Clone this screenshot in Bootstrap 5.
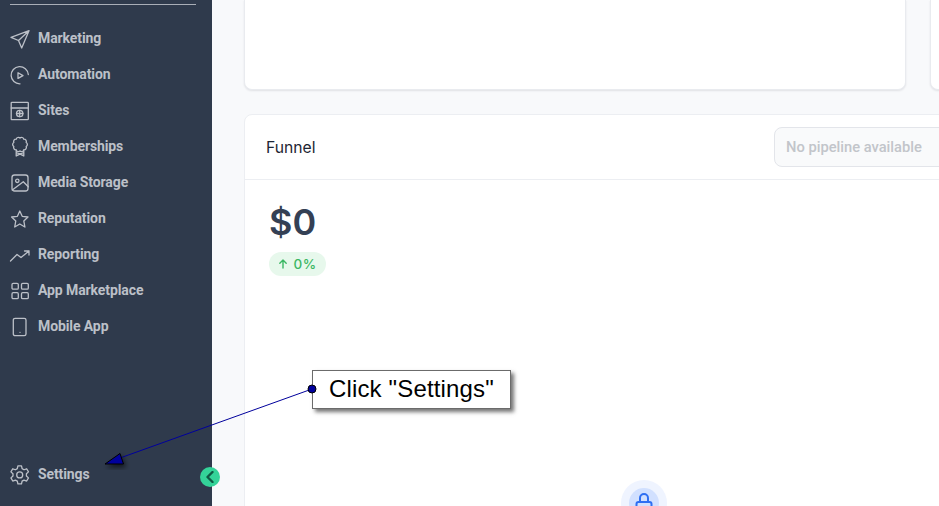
<!DOCTYPE html>
<html lang="en">
<head>
    <meta charset="UTF-8">
    <meta name="viewport" content="width=device-width, initial-scale=1.0">
    <title>Funnel</title>
    <link href="https://cdn.jsdelivr.net/npm/bootstrap@5.3.0/dist/css/bootstrap.min.css" rel="stylesheet">
    <style>
        html, body { height: 506px; overflow: hidden; }
        body { background: #f8f9fb; font-family: Inter, sans-serif; }
        .page-wrap { width: 939px; height: 506px; overflow: hidden; position: relative; }
        .side-bar { width: 212px; height: 506px; background: #2f3a4c; padding: 4px 16px 14px 10px; flex-shrink: 0; }
        .side-rule { height: 1px; background: #a9aeb7; margin-bottom: 15px; }
        .side-link { height: 36px; gap: 8px; color: #bcc0c8; font: 700 14px/36px Roboto, sans-serif; letter-spacing: -.1px; text-decoration: none; }
        .side-link:hover { color: #bcc0c8; }
        .side-link svg { width: 20px; height: 20px; fill: none; stroke: #bcc0c8; stroke-width: 1.3; stroke-linecap: round; stroke-linejoin: round; flex-shrink: 0; overflow: visible; }
        .side-link svg * { vector-effect: non-scaling-stroke; }
        .collapse-btn { position: absolute; left: 200px; top: 467px; width: 20px; height: 20px; border-radius: 50%; background: #34d399; }
        .main-pane { width: 727px; padding-left: 32px; flex-shrink: 0; }
        .top-row { height: 90px; gap: 24px; }
        .top-card { width: 662px; flex-shrink: 0; background: #fff; border: 1px solid #e9ebef; border-top: 0; border-radius: 0 0 8px 8px; box-shadow: 0 1px 2px rgba(16,24,40,.1); }
        .funnel-card { width: 800px; margin-top: 24px; background: #fff; border: 1px solid #eceef2; border-radius: 8px; }
        .funnel-head { height: 65px; padding: 0 21px; border-bottom: 1px solid #eceef2; }
        .funnel-title { padding-top: 2px; font-size: 15.7px; color: #1d2533; }
        .pipeline-box { width: 240px; height: 40px; margin-right: 8px; padding-left: 11px; background: #f9fafb; border: 1px solid #e3e5ea; border-radius: 8px; color: #c2c5ca; font: 500 14.7px/38px Roboto, sans-serif; }
        .funnel-body { padding: 20px 24px 0; }
        .money-text { color: #344054; font-size: 36px; font-weight: 600; line-height: 44px; }
        .trend-pill { width: 57px; height: 24px; margin-top: 8px; background: #e7f8ec; border-radius: 12px; color: #3cb764; font-size: 13.5px; font-weight: 500; gap: 5px; letter-spacing: .5px; }
        .trend-pill svg { width: 10px; height: 10px; fill: none; stroke: #3cb764; stroke-width: 1.4; stroke-linecap: round; stroke-linejoin: round; }
        .lock-ring { width: 46px; height: 46px; margin: 204px auto 0; border-radius: 50%; background: #eff4ff; }
        .lock-core { width: 30px; height: 30px; border-radius: 50%; background: #d1e0ff; }
        .lock-core svg { width: 20px; height: 20px; fill: none; stroke: #2e6ff2; stroke-width: 2; stroke-linecap: round; stroke-linejoin: round; }
        .arrow-layer { position: absolute; left: 0; top: 0; width: 939px; height: 506px; pointer-events: none; }
        .note-box { position: absolute; left: 312px; top: 370px; width: 199px; height: 39px; padding-left: 16px; background: #fff; border: 1px solid #6b6b6b; box-shadow: 3px 3px 4px rgba(0,0,0,.55); color: #000; font: 400 24px/36px "Liberation Sans", sans-serif; letter-spacing: .15px; white-space: nowrap; }
    </style>
</head>
<body>
<div class="page-wrap d-flex">
    <nav class="side-bar d-flex flex-column">
        <div class="side-rule"></div>
        <a class="side-link d-flex align-items-center" href="#"><svg viewBox="0 0 20 20"><path d="M19 2.700 1 9.300l7.500 3.200L11.700 20 19 2.700ZM8.500 12.500 19 2.700"/></svg>Marketing</a>
        <a class="side-link d-flex align-items-center" href="#"><svg viewBox="0 0 20 20"><path d="M18.300 10.500A8.600 8.600 0 1 0 10 19.800"/><path d="M8 8.800v5.600l5-2.800-5-2.800Z"/></svg>Automation</a>
        <a class="side-link d-flex align-items-center" href="#"><svg viewBox="0 0 20 20"><rect x="1.200" y="2.300" width="17.100" height="17.400" rx=".8"/><path d="M1.200 8h17.100"/><circle cx="9.700" cy="13.500" r="3.200"/><path d="M6.500 13.500h6.400M9.700 10.300v6.400"/></svg>Sites</a>
        <a class="side-link d-flex align-items-center" href="#"><svg viewBox="0 0 20 20"><path d="M10 2A2.300 2.300 0 0 1 13.820 3.240 2.300 2.300 0 0 1 16.180 6.490 2.300 2.300 0 0 1 16.180 10.510 2.300 2.300 0 0 1 13.820 13.760 2.300 2.300 0 0 1 10 15 2.300 2.300 0 0 1 6.180 13.760 2.300 2.300 0 0 1 3.820 10.510 2.300 2.300 0 0 1 3.820 6.490 2.300 2.300 0 0 1 6.180 3.240 2.300 2.300 0 0 1 10 2Z"/><path d="M6.200 15v5l3.800-2.500 3.800 2.500v-5M6.200 16.500l7.600 3.500M13.800 16.500 6.200 20"/></svg>Memberships</a>
        <a class="side-link d-flex align-items-center" href="#"><svg viewBox="0 0 20 20"><rect x="2" y="3" width="16" height="16" rx="2.500"/><circle cx="7.300" cy="8.800" r="1.700"/><path d="M2.300 18 13.300 9.700l5 5"/></svg>Media Storage</a>
        <a class="side-link d-flex align-items-center" href="#"><svg viewBox="0 0 20 20"><path d="M9.800 3 12.200 8.300 18 9 13.800 12.900 14.900 19 9.800 16 4.700 19 5.800 12.900 1.600 9 7.400 8.300Z"/></svg>Reputation</a>
        <a class="side-link d-flex align-items-center" href="#"><svg viewBox="0 0 20 20"><path d="M.5 17 7 10.500l4 3L19 7M14.500 7H19v4"/></svg>Reporting</a>
        <a class="side-link d-flex align-items-center" href="#"><svg viewBox="0 0 20 20"><rect x="2" y="3.300" width="6.300" height="5.800" rx="1.200"/><rect x="11.500" y="3.300" width="6.800" height="5.800" rx="1.200"/><rect x="2" y="12.700" width="6.300" height="6" rx="1.200"/><rect x="11.500" y="12.700" width="6.800" height="6" rx="1.200"/></svg>App Marketplace</a>
        <a class="side-link d-flex align-items-center" href="#"><svg viewBox="0 0 20 20"><rect x="3.300" y="2.300" width="12.700" height="17.400" rx="1.800"/><path d="M10 16.300h.01"/></svg>Mobile App</a>
        <a class="side-link d-flex align-items-center mt-auto" href="#"><svg viewBox="0 0 20 20"><g transform="translate(9.700 11.200) scale(1.200) translate(-9 -8.750)"><path d="m7.500 1h3l.5 2.300 1.600.9 2.200-.8 1.500 2.600-1.700 1.600v1.800l1.700 1.600-1.500 2.600-2.200-.8-1.600.9-.5 2.300h-3L7 13.700l-1.600-.9-2.200.8-1.500-2.600 1.700-1.600V7.600L1.700 6l1.500-2.600 2.200.8L7 3.300 7.500 1Z"/><circle cx="9" cy="8.500" r="2.500"/></g></svg>Settings</a>
    </nav>
    <main class="main-pane">
        <div class="top-row d-flex">
            <div class="top-card"></div>
            <div class="top-card"></div>
        </div>
        <section class="funnel-card">
            <div class="funnel-head d-flex align-items-center">
                <span class="funnel-title">Funnel</span>
                <div class="pipeline-box ms-auto">No pipeline available</div>
            </div>
            <div class="funnel-body">
                <div class="money-text">$0</div>
                <div class="trend-pill d-flex align-items-center justify-content-center">
                    <svg viewBox="0 0 10 10"><path d="M5 9V1M1.800 4.200 5 1l3.200 3.200"/></svg>0%
                </div>
                <div class="lock-ring d-flex align-items-center justify-content-center">
                    <div class="lock-core d-flex align-items-center justify-content-center">
                        <svg viewBox="0 0 20 20"><rect x="2.500" y="9" width="15" height="9" rx="2"/><path d="M6 9V5a4 4 0 0 1 8 0v4"/></svg>
                    </div>
                </div>
            </div>
        </section>
    </main>
    <div class="collapse-btn d-flex align-items-center justify-content-center">
        <svg width="10" height="12" viewBox="0 0 10 12" fill="none" stroke="#0f5b45" stroke-width="2.400" stroke-linecap="round" stroke-linejoin="round"><path d="M7.500 1 2.500 6l5 5"/></svg>
    </div>
    <svg class="arrow-layer" viewBox="0 0 939 506">
        <defs><filter id="arrowShade" x="-50%" y="-50%" width="200%" height="200%"><feDropShadow dx="2" dy="3" stdDeviation="2.500" flood-color="#000" flood-opacity=".6"/></filter></defs>
        <path d="M312 389 120 458" stroke="#00009c" stroke-width="1" fill="none"/>
        <path d="M105 464 120 453.500 123.500 464Z" fill="#00009c" stroke="#000" stroke-width="1" filter="url(#arrowShade)"/>
    </svg>
    <div class="note-box">Click "Settings"</div>
    <svg class="arrow-layer" viewBox="0 0 939 506"><circle cx="312" cy="389" r="4" fill="#00009c" stroke="#000" stroke-width="1"/></svg>
</div>
<script src="https://cdn.jsdelivr.net/npm/bootstrap@5.3.0/dist/js/bootstrap.bundle.min.js"></script>
</body>
</html>
